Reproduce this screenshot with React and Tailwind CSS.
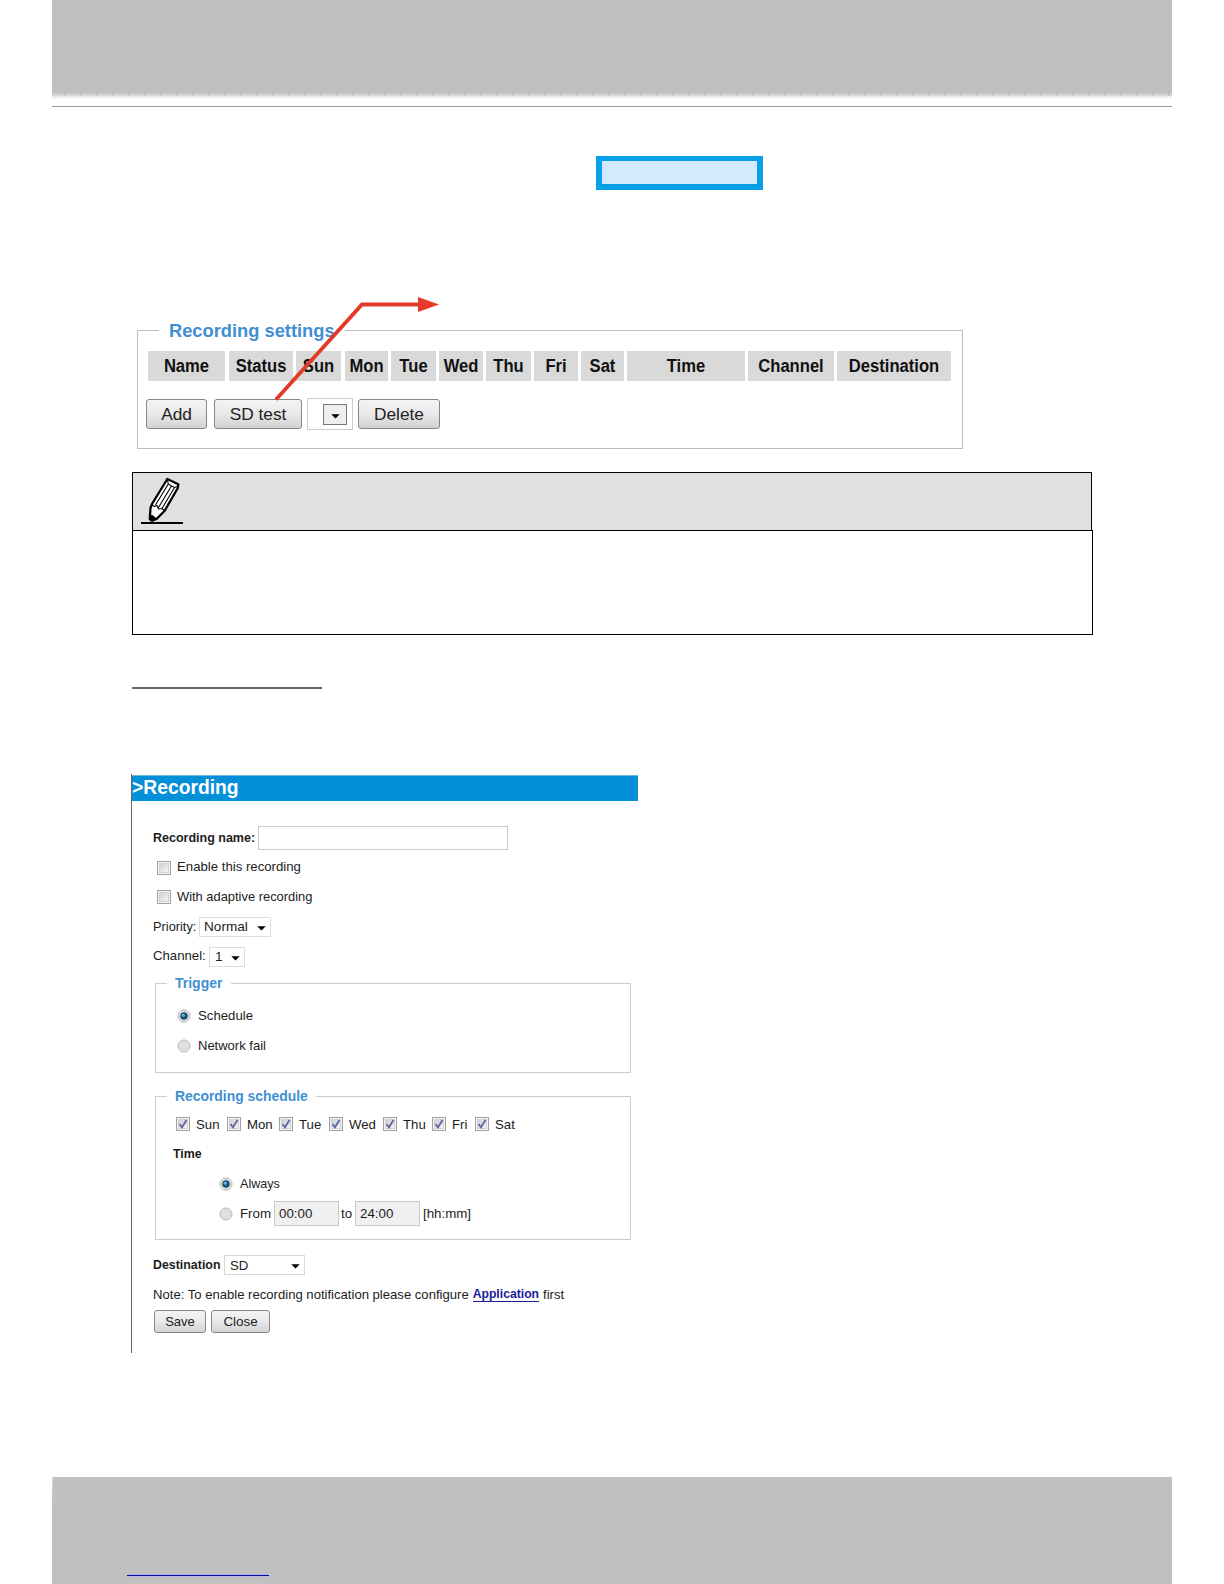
import React from "react";

const columns = [
  { label: "Name", width: "w-[77px]", gap: "mr-1" },
  { label: "Status", width: "w-[64px]", gap: "mr-[3px]" },
  { label: "Sun", width: "w-[45px]", gap: "mr-1" },
  { label: "Mon", width: "w-[43px]", gap: "mr-[3px]" },
  { label: "Tue", width: "w-[45px]", gap: "mr-[3px]" },
  { label: "Wed", width: "w-[44px]", gap: "mr-[3px]" },
  { label: "Thu", width: "w-[45px]", gap: "mr-[3px]" },
  { label: "Fri", width: "w-[44px]", gap: "mr-[3px]" },
  { label: "Sat", width: "w-[43px]", gap: "mr-[3px]" },
  { label: "Time", width: "w-[118px]", gap: "mr-[3px]" },
  { label: "Channel", width: "w-[86px]", gap: "mr-[3px]" },
  { label: "Destination", width: "w-[114px]", gap: "" },
];

const days = [
  { label: "Sun", width: "w-[51px]" },
  { label: "Mon", width: "w-[52px]" },
  { label: "Tue", width: "w-[50px]" },
  { label: "Wed", width: "w-[54px]" },
  { label: "Thu", width: "w-[49px]" },
  { label: "Fri", width: "w-[43px]" },
  { label: "Sat", width: "w-[50px]" },
];

const Checkbox = ({ checked }) => (
  <span className="flex h-[14px] w-[14px] shrink-0 items-center justify-center border border-[#a2a2a2] bg-[#f4f4f4]">
    <span className="flex h-[10px] w-[10px] items-center justify-center border border-[#d2d2d6] bg-gradient-to-br from-[#cfcfd4] to-[#f6f6f6]">
      {checked && (
        <svg width="10" height="10" viewBox="0 0 10 10" className="shrink-0">
          <path d="M1.5 5 L4 8.3 L8.5 1" fill="none" stroke="#6467a6" strokeWidth="1.9" />
        </svg>
      )}
    </span>
  </span>
);

const Radio = ({ checked }) => (
  <svg width="14" height="14" viewBox="0 0 14 14" className="shrink-0">
    <circle cx="7" cy="7" r="6" fill="#f6f6f6" stroke="#adadad" />
    <circle cx="7" cy="7" r="4.2" fill="#e2e2e2" stroke="#c8c8c8" strokeWidth="0.8" />
    {checked && (
      <>
        <circle cx="7" cy="7" r="3.8" fill="#1f5478" />
        <circle cx="6.2" cy="6.2" r="1.6" fill="#5fb4d6" />
      </>
    )}
  </svg>
);

const Arrow = () => (
  <svg width="9" height="5" viewBox="0 0 9 5" className="mt-[2px] shrink-0">
    <path d="M0.3 0.3 H8.7 L4.5 4.6 Z" fill="#000" />
  </svg>
);

const Button = ({ children, className }) => (
  <button
    className={`flex shrink-0 items-center justify-center rounded-[3px] border border-[#868686] bg-gradient-to-b from-[#f4f4f4] via-[#e9e9e9] to-[#d2d2d2] text-[#222] ${className}`}
  >
    {children}
  </button>
);

const Pencil = () => (
  <svg width="44" height="48" viewBox="0 0 44 48" className="ml-[7px] mt-[4px]">
    <path
      d="M12.3 26.5 L27.3 2 L38.3 7.2 L37.8 11 L24.7 33.7 L16.5 42 L12 43.8 L9.8 42 L10.5 31 Z"
      fill="#fff"
      stroke="#000"
      strokeWidth="2.3"
      strokeLinejoin="round"
    />
    <path d="M9.5 38.5 L13 38.8 L16.3 41.8 L12 44 L9.8 43 Z" fill="#000" stroke="#000" strokeLinejoin="round" />
    <path
      d="M12 28 L14.5 29.5 L17 28.5 L18.5 32 L22 31.5 L24.5 33.5 M15.5 28 L28.3 7 M18.5 30.5 L31.5 9 M22 31.5 L34.5 10.5 M27.5 3 L28.3 7 L31.5 9 L34.5 10.5 L37.5 9.5"
      fill="none"
      stroke="#000"
      strokeWidth="1.1"
    />
    <path d="M1 46 H43" stroke="#000" strokeWidth="2" />
  </svg>
);

const RecordingSettings = () => (
  <div className="relative ml-[137px] mt-[130px] h-[129px] w-[826px]">
    <fieldset className="h-[129px] border border-[#bdbdbd]">
      <legend className="ml-[21px] h-[21px] w-[186px] pl-[10px] text-[18.3px] font-bold leading-[21px] text-[#3f8fd3]">
        Recording settings
      </legend>
      <div className="ml-[10px] mt-[10px] flex h-[30px]">
        {columns.map((col) => (
          <div
            key={col.label}
            className={`flex shrink-0 items-center justify-center bg-[#d9d9d9] pt-[2px] text-[16.6px] font-bold text-[#111] ${col.width} ${col.gap}`}
          >
            <span className="scale-y-[1.07]">{col.label}</span>
          </div>
        ))}
      </div>
      <div className="ml-[8px] mt-[17px] flex h-8 items-center text-[17.3px]">
        <Button className="h-[30px] w-[61px] pt-px">Add</Button>
        <Button className="ml-[7px] h-[30px] w-[88px] pt-px">SD test</Button>
        <div className="ml-[5px] flex h-8 w-[46px] items-center justify-end border border-[#c9ccd2] pr-[5px]">
          <div className="flex h-[21px] w-[24px] items-center justify-center border border-[#777] bg-[#eee] pt-[2px]">
            <Arrow />
          </div>
        </div>
        <Button className="ml-[5px] h-[30px] w-[82px] pt-px">Delete</Button>
      </div>
    </fieldset>
    {/* callout arrow coming out of the SD test button */}
    <svg
      width="310"
      height="110"
      viewBox="0 0 310 110"
      className="pointer-events-none absolute -top-[28px] left-0"
    >
      <path d="M139 107.5 L225 12.5 H284" fill="none" stroke="#e23a28" strokeWidth="3.8" />
      <path d="M281 5 L302 12.5 L281 20 Z" fill="#e8392a" />
    </svg>
  </div>
);

const RecordingForm = () => (
  <div className="ml-[131px] mt-[85px] h-[579px] w-[507px] border-l border-[#60656b] text-[13.2px] text-[#1c1c1c]">
    <div className="mt-px flex h-[26px] items-center border-t border-[#6fb5dc] bg-[#048fd9] text-[19.3px] font-bold text-white">
      &gt;Recording
    </div>

    <div className="ml-[21px] mt-[22px] flex h-[30px] items-center">
      <span className="w-[105px] text-[12.5px] font-bold">Recording name:</span>
      <input className="h-6 w-[250px] border border-[#c6cdd2]" />
    </div>
    <div className="ml-[25px] flex h-[29px] items-center gap-[6px]">
      <Checkbox />
      <span className="pb-px">Enable this recording</span>
    </div>
    <div className="ml-[25px] flex h-[30px] items-center gap-[6px] text-[12.9px]">
      <Checkbox />
      With adaptive recording
    </div>
    <div className="ml-[21px] flex h-[30px] items-center">
      <span className="w-[46px] text-[12.8px]">Priority:</span>
      <div className="flex h-5 w-[72px] items-center justify-between border border-[#dcdcdc] pl-1 pr-[4px] pt-px text-[13.6px]">
        Normal
        <Arrow />
      </div>
    </div>
    <div className="ml-[21px] flex h-[29px] items-center">
      <span className="w-[56px] pb-px text-[13.2px]">Channel:</span>
      <div className="flex h-5 w-[36px] items-center justify-between border border-[#dcdcdc] pl-[5px] pr-[4px] pt-px text-[13.6px]">
        1
        <Arrow />
      </div>
    </div>

    <fieldset className="ml-[23px] mt-[4px] h-[98px] w-[476px] border border-[#cdcdc8]">
      <legend className="ml-[11px] h-[17px] w-[64px] pl-[8px] text-[14px] font-bold leading-[17px] text-[#3f8fd3]">
        Trigger
      </legend>
      <div className="ml-[21px] mt-[9px] flex h-[30px] items-center gap-[7px]">
        <Radio checked />
        Schedule
      </div>
      <div className="ml-[21px] flex h-[30px] items-center gap-[7px] text-[13px]">
        <Radio />
        Network fail
      </div>
    </fieldset>

    <fieldset className="ml-[23px] mt-[15px] h-[152px] w-[476px] border border-[#cdcdc8]">
      <legend className="ml-[11px] h-[17px] w-[149px] pl-[8px] text-[13.9px] font-bold leading-[17px] text-[#3f8fd3]">
        Recording schedule
      </legend>
      <div className="ml-[20px] mt-[5px] flex h-[29px] items-center">
        {days.map((day) => (
          <div key={day.label} className={`flex shrink-0 items-center gap-[6px] ${day.width}`}>
            <Checkbox checked />
            {day.label}
          </div>
        ))}
      </div>
      <div className="ml-[17px] mt-px flex h-[29px] items-center text-[12.4px] font-bold">Time</div>
      <div className="ml-[63px] flex h-[30px] items-center gap-[7px] text-[12.6px]">
        <Radio checked />
        Always
      </div>
      <div className="ml-[63px] flex h-[29px] items-center text-[13.3px]">
        <Radio />
        <span className="ml-[7px] w-[34px]">From</span>
        <div className="flex h-[25px] w-[65px] items-center border border-[#c3ccd1] bg-[#f0f0f0] pl-1">
          00:00
        </div>
        <span className="ml-[2px] w-[14px]">to</span>
        <div className="flex h-[25px] w-[65px] items-center border border-[#c3ccd1] bg-[#f0f0f0] pl-1">
          24:00
        </div>
        <span className="ml-[3px]">[hh:mm]</span>
      </div>
    </fieldset>

    <div className="ml-[21px] mt-[10px] flex h-[30px] items-center">
      <span className="w-[71px] text-[12.4px] font-bold">Destination</span>
      <div className="flex h-5 w-[81px] items-center justify-between border border-[#d8d8d8] pl-[5px] pr-[4px] pt-px">
        SD
        <Arrow />
      </div>
    </div>
    <div className="ml-[21px] flex h-[29px] items-center text-[13.1px]">
      <span>Note: To enable recording notification please configure</span>
      <a className="ml-[4px] mt-px border-b border-[#1a1a9c] text-[12.2px] font-bold leading-[13px] text-[#1a1a9c]">
        Application
      </a>
      <span className="ml-[4px]">first</span>
    </div>
    <div className="ml-[22px] mt-[1px] flex gap-[5px] text-[13px]">
      <Button className="h-[23px] w-[52px]">Save</Button>
      <Button className="h-[23px] w-[59px] pt-px text-[13.4px]">Close</Button>
    </div>
  </div>
);

export default function App() {
  return (
    <div className="flex h-[1584px] w-[1224px] flex-col overflow-hidden bg-white font-['Liberation_Sans',Arial,sans-serif]">
      <header className="ml-[52px] w-[1120px] shrink-0">
        <div className="h-[93px] bg-[#c0c0c0]"></div>
        <div className="h-[3px] bg-gradient-to-b from-[#c4c4c4] to-[#dedede]">
          <div className="h-full bg-[repeating-linear-gradient(90deg,transparent_0px,transparent_12px,#bdbdbd_12px,#bdbdbd_13px,transparent_13px,transparent_16px)]"></div>
        </div>
        <div className="h-[3px] bg-gradient-to-b from-[#e6e6e6] to-[#fbfbfb]">
          <div className="h-full bg-[repeating-linear-gradient(90deg,transparent_0px,transparent_11px,#fafafa_11px,#fafafa_13px,transparent_13px,transparent_16px)]"></div>
        </div>
        <div className="mt-[7px] h-px bg-[#999]"></div>
      </header>

      <main className="flex flex-1 flex-col">
        <div className="ml-[596px] mt-[49px] h-[34px] w-[167px] border-x-[6px] border-t-[5px] border-b-[6px] border-[#05a0e8] bg-[#d2eafb]"></div>

        <RecordingSettings />

        <div className="ml-[132px] mt-[23px]">
          <div className="h-[58px] w-[960px] border-x border-t border-black bg-[#e0e0e0]">
            <Pencil />
          </div>
          <div className="h-[105px] w-[961px] border border-black"></div>
        </div>

        <div className="ml-[132px] mt-[52px] h-[2px] w-[190px] bg-[#666]"></div>

        <RecordingForm />
      </main>

      <footer className="ml-[52px] flex h-[107px] w-[1120px] shrink-0 bg-[#c0c0c0]">
        <div className="h-[27px] w-px bg-gradient-to-b from-[#dcdcdc] to-[#c0c0c0]"></div>
        <div className="ml-[74px] mt-[97px] h-[3px] w-[142px] border-y border-[#b3b3ee] bg-[#0a0aa0]"></div>
      </footer>
    </div>
  );
}
